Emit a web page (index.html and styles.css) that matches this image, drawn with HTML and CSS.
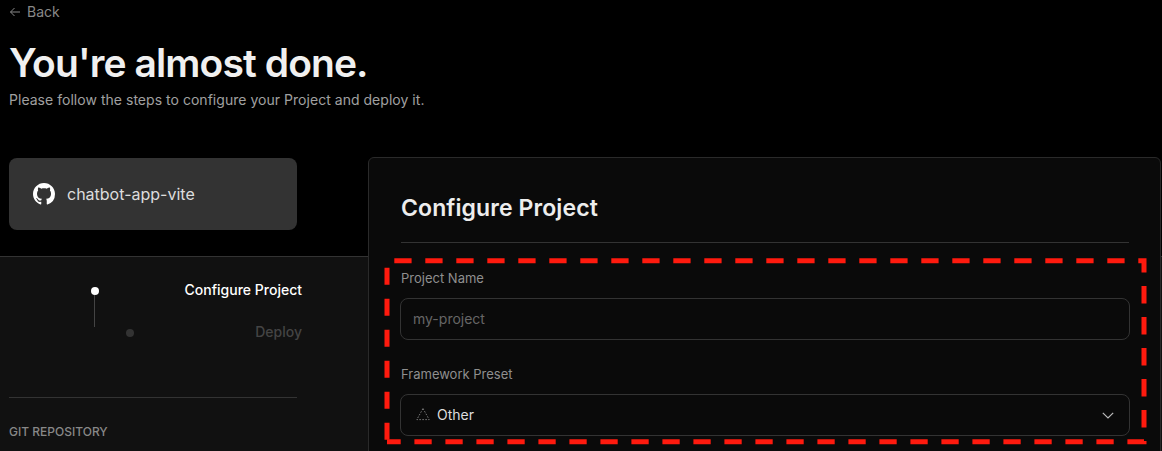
FILE: index.html
```html
<!DOCTYPE html>
<html lang="en">
<head>
<meta charset="utf-8">
<title>You're almost done.</title>
<link rel="stylesheet" href="styles.css">
</head>
<body>
<div class="page">
  <header class="head">
    <a class="back"><svg class="back-icon" viewBox="0 0 12 12" width="12" height="12"><path d="M11 6H1.5M5.5 2 1.5 6l4 4" fill="none" stroke="currentColor" stroke-width="1"/></svg>Back</a>
    <h1 class="title">You're almost done.</h1>
    <p class="sub">Please follow the steps to configure your Project and deploy it.</p>
  </header>
  <div class="stage">
    <div class="band"></div>
    <aside class="side">
      <div class="repo">
        <svg class="gh" viewBox="0 0 16 16" width="22" height="22"><path fill="#fff" d="M8 0C3.58 0 0 3.58 0 8c0 3.54 2.29 6.53 5.47 7.59.4.07.55-.17.55-.38 0-.19-.01-.82-.01-1.49-2.01.37-2.53-.49-2.69-.94-.09-.23-.48-.94-.82-1.13-.28-.15-.68-.52-.01-.53.63-.01 1.08.58 1.23.82.72 1.21 1.87.87 2.33.66.07-.52.28-.87.51-1.07-1.78-.2-3.64-.89-3.64-3.95 0-.87.31-1.59.82-2.15-.08-.2-.36-1.02.08-2.12 0 0 .67-.21 2.2.82.64-.18 1.32-.27 2-.27.68 0 1.36.09 2 .27 1.53-1.04 2.2-.82 2.2-.82.44 1.1.16 1.92.08 2.12.51.56.82 1.27.82 2.15 0 3.07-1.87 3.75-3.65 3.95.29.25.54.73.54 1.48 0 1.07-.01 1.93-.01 2.2 0 .21.15.46.55.38A8.013 8.013 0 0016 8c0-4.42-3.58-8-8-8z"/></svg>
        <span class="repo-name">chatbot-app-vite</span>
      </div>
      <ol class="steps">
        <li class="step step-active"><i class="dot"></i><span>Configure Project</span></li>
        <li class="step step-next"><i class="dot"></i><span>Deploy</span></li>
      </ol>
      <div class="rule"></div>
      <div class="git">GIT REPOSITORY</div>
    </aside>
    <section class="card">
      <h2 class="card-title">Configure Project</h2>
      <div class="field">
        <label class="label">Project Name</label>
        <div class="input"><span class="placeholder">my-project</span></div>
      </div>
      <div class="field">
        <label class="label">Framework Preset</label>
        <div class="input select">
          <svg class="tri" viewBox="0 0 14 14" width="14" height="14"><path d="M7 1.5 13.2 12.6H.8Z" fill="none" stroke="#777" stroke-width="1" stroke-dasharray="1.6 1.4"/></svg>
          <span class="value">Other</span>
          <svg class="chev" viewBox="0 0 12 7" width="12" height="7"><path d="M.8.8 6 6 11.2.8" fill="none" stroke="#bbb" stroke-width="1.2"/></svg>
        </div>
      </div>
    </section>
  </div>
  <svg class="mark" width="1162" height="451" viewBox="0 0 1162 451">
    <path class="dash" d="M387 260.8H1144V441.8H387"/>
    <path class="dash dash-left" d="M387 439.7V260"/>
  </svg>
</div>
</body>
</html>
```
FILE: styles.css
```css
* { box-sizing: border-box; }
html, body { margin: 0; height: 100%; overflow: hidden; background: #000; }
body { font-family: Inter, "Liberation Sans", sans-serif; color: #ededed; }
.page { position: relative; width: 1162px; height: 451px; overflow: hidden; }

.head { height: 157px; padding-left: 9px; }
.back { display: flex; align-items: center; gap: 6px; height: 23px; color: #888; font-size: 14px; }
.back-icon { display: block; }
.title { margin: 15px 0 0; font-size: 39px; line-height: 50px; font-weight: 600; letter-spacing: -0.9px; color: #f0f0f0; }
.sub { margin: 2px 0 0; font-size: 14px; line-height: 20px; letter-spacing: 0.03px; color: #a0a0a0; }

.stage { position: relative; display: grid; grid-template-columns: 368px 793px; align-items: start; }
.band { position: absolute; left: 0; right: 0; top: 99px; bottom: -200px; background: #111; border-top: 1px solid #333; }

.side { position: relative; padding: 1px 0 0 9px; }
.repo { display: flex; align-items: center; gap: 12px; width: 288px; height: 72px; padding-left: 24px; background: #333; border-radius: 8px; }
.gh { display: block; flex: none; }
.repo-name { font-size: 16px; color: #ddd; }

.steps { list-style: none; margin: 49px 0 0; padding: 0; width: 293px; }
.step { display: flex; align-items: center; justify-content: space-between; height: 20px; font-size: 14px; font-weight: 500; }
.step .dot { display: block; width: 8px; height: 8px; margin-top: 4px; border-radius: 50%; }
.step-active { position: relative; color: #fff; }
.step-active .dot { margin-left: 82px; background: #fff; }
.step-active::after { content: ""; position: absolute; left: 85px; top: 16px; width: 1px; height: 32px; background: #444; }
.step-next { margin-top: 22px; color: #444; }
.step-next .dot { margin-left: 117px; background: #333; }

.rule { width: 288px; height: 1px; margin-top: 56px; background: #333; }
.git { margin-top: 26px; font-size: 12px; line-height: 16px; font-weight: 500; color: #888; }

.card { position: relative; height: 400px; padding: 0 31px 0 32px; background: #0a0a0a; border: 1px solid #2a2a2a; border-radius: 6px; }
.card-title { height: 85px; margin: 0; padding-top: 33px; font-size: 23px; line-height: 34px; font-weight: 600; letter-spacing: 0.1px; color: #ededed; border-bottom: 1px solid #333; }
.field { margin-top: 26px; }
.field + .field { margin-top: 25px; }
.label { display: block; height: 20px; margin-bottom: 10px; margin-top: -1px; font-size: 13px; line-height: 20px; color: #8f8f8f; }
.input { display: flex; align-items: center; width: 730px; height: 42px; margin-left: -1px; padding: 0 12px 2px; border: 1px solid #333; border-radius: 8px; font-size: 14px; }
.placeholder { color: #666; }
.select { padding-left: 15px; }
.tri { display: block; flex: none; margin-right: 7px; }
.value { color: #ddd; }
.chev { display: block; margin: 2px 3px 0 auto; }

.mark { position: absolute; left: 0; top: 0; pointer-events: none; }
.dash { fill: none; stroke: #ff1a0e; stroke-width: 5; stroke-dasharray: 17.3 13.7; stroke-dashoffset: 23.7; }
.dash-left { stroke-dasharray: 17 14; stroke-dashoffset: 0; }
```
